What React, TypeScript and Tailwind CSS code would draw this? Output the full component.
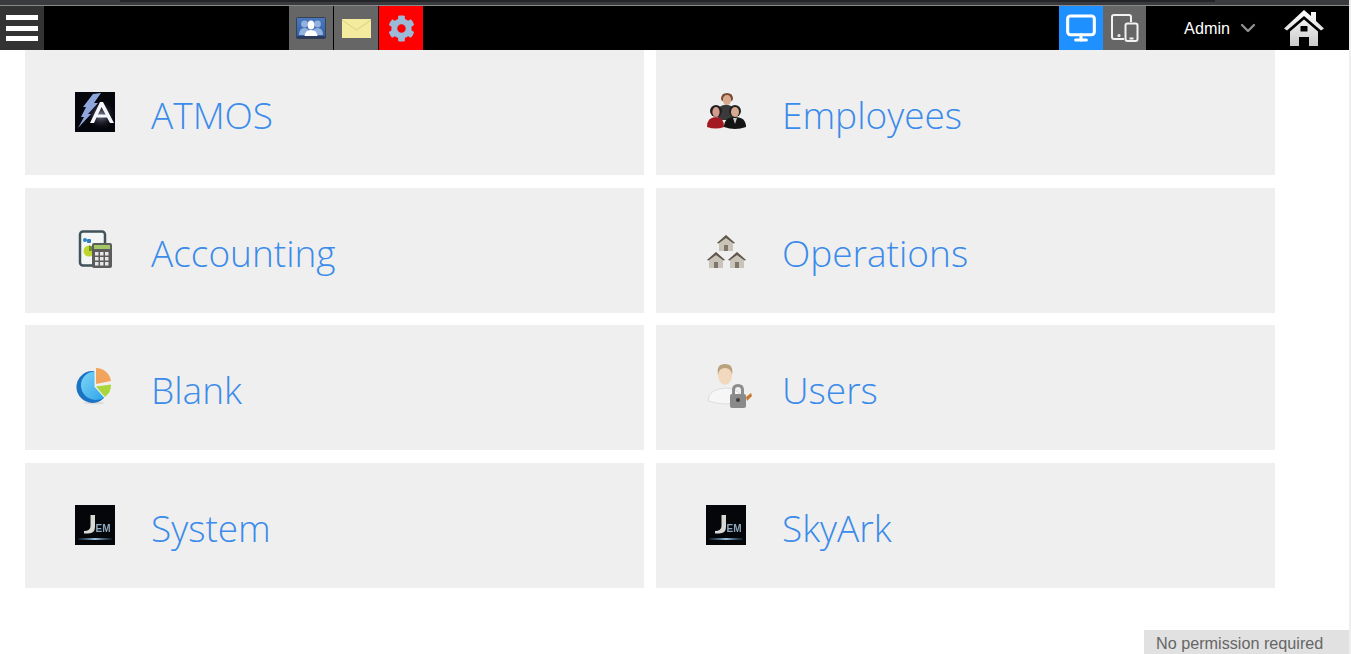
import React from "react";
import { Monitor, ChevronDown } from "lucide-react";
import { FaCog } from "react-icons/fa";

const AtmosIcon = () => (
  <svg width="40" height="40" viewBox="0 0 40 40">
    <defs>
      <radialGradient id="atmosglow" cx="0.5" cy="0.5" r="0.5">
        <stop offset="0" stopColor="#8d93ad" stopOpacity="0.9" />
        <stop offset="1" stopColor="#05050c" stopOpacity="0" />
      </radialGradient>
    </defs>
    <rect width="40" height="40" fill="#05050c" />
    <ellipse cx="26" cy="23" rx="16" ry="15" fill="url(#atmosglow)" />
    <path d="M18 2 L26 1 L19 11 L23 11 L13 22 L16 22 L3 36 L9 25 L6 25 L11 15 L8 15 Z" fill="#8fa6dc" />
    <path d="M25 10 L28 10 L39 31 L35 31 L32 25.5 L21.5 25.5 L19 31 L15 31 Z M26.5 15 L23 22.5 L30.5 22.5 Z" fill="#f4f6fb" fillRule="evenodd" />
  </svg>
);

const JemIcon = () => (
  <svg width="40" height="40" viewBox="0 0 40 40" style={{ fontFamily: "'Liberation Sans', sans-serif" }}>
    <defs>
      <linearGradient id="jemline" x1="0" y1="0" x2="1" y2="0">
        <stop offset="0" stopColor="#4a7296" stopOpacity="0.2" />
        <stop offset="0.5" stopColor="#9cc3e2" />
        <stop offset="1" stopColor="#4a7296" stopOpacity="0.2" />
      </linearGradient>
    </defs>
    <rect width="40" height="40" fill="#04060a" />
    <path d="M15.5 10 L20 10 L20 22 Q20 28.5 13 28.5 L9 28.5 L9 26 Q15.5 26 15.5 21 Z" fill="#d8d8d4" />
    <text x="20.5" y="27" fontSize="10" fontWeight="700" fill="#8fa8bd">EM</text>
    <rect x="3" y="33" width="34" height="2" rx="1" fill="url(#jemline)" />
  </svg>
);

const AccountingIcon = () => (
  <svg width="40" height="40" viewBox="0 0 40 40">
    <rect x="5" y="1.5" width="25" height="34" rx="3" fill="#f3f6f5" stroke="#42535a" strokeWidth="2.5" />
    <circle cx="10" cy="10" r="2" fill="#2f7fc0" />
    <rect x="12" y="9" width="4" height="4" rx="1" fill="#2f7fc0" />
    <circle cx="14" cy="21" r="5.5" fill="#bfd62f" />
    <path d="M14 21 L14 15.5 A5.5 5.5 0 0 1 19.5 21 Z" fill="#6f8f2a" />
    <rect x="17" y="13" width="20" height="25" rx="2" fill="#5c5c5c" />
    <rect x="19" y="15" width="16" height="4" fill="#a3c764" />
    {[22, 27, 32].map((y) =>
      [20, 25, 30].map((x) => <rect key={`${x}-${y}`} x={x} y={y} width="3.5" height="3.5" fill="#e6e6e6" />)
    )}
  </svg>
);

const BlankIcon = () => (
  <svg width="40" height="40" viewBox="0 0 40 40">
    <defs>
      <linearGradient id="pieb" x1="0" y1="0" x2="1" y2="1">
        <stop offset="0" stopColor="#7fd6f7" />
        <stop offset="1" stopColor="#2ea4e8" />
      </linearGradient>
    </defs>
    <ellipse cx="19" cy="36" rx="11" ry="1.5" fill="#ddd" />
    <path d="M19 4 A16 16 0 1 0 29 31 L19 20 Z" fill="#1b73c4" />
    <path d="M19.5 4.5 A14 14 0 0 0 6 20 A15 15 0 0 0 29 30.5 L19.5 20 Z" fill="url(#pieb)" />
    <path d="M21 19.5 L36 17.5 A15 15 0 0 1 30 30 Z" fill="#a9d63c" />
    <path d="M21 1 L21 17 L36 14 A15 15 0 0 0 21 1 Z" fill="#f2a45c" />
  </svg>
);

const EmployeesIcon = () => (
  <svg width="40" height="40" viewBox="0 0 40 40">
    <path d="M12 16 Q20 9 28 16 L28 28 L12 28 Z" fill="#3a3a3a" />
    <path d="M15 7 Q15 1 21 1 Q27 1 27 7 L26 9 L16 9 Z" fill="#7a4a32" />
    <ellipse cx="21" cy="8" rx="4.2" ry="5" fill="#d9a98c" />
    <circle cx="10" cy="19" r="6" fill="#1f1f1f" />
    <ellipse cx="10" cy="20" rx="3.6" ry="5" fill="#d69b8c" />
    <path d="M1 35 Q1 25 10 25 Q18 25 18 35 Q10 38 1 35 Z" fill="#a31921" />
    <circle cx="29" cy="19" r="6" fill="#222" />
    <ellipse cx="29" cy="20" rx="4" ry="5" fill="#d8aa92" />
    <path d="M18 35 Q18 25 29 25 Q40 25 40 35 Q29 39 18 35 Z" fill="#141414" />
    <path d="M27 26 L31 26 L29 32 Z" fill="#c9c9c9" />
  </svg>
);

const House = ({ x, y }: { x: number; y: number }) => (
  <g transform={`translate(${x} ${y})`}>
    <path d="M0 8 L9 0 L18 8 L16 8 L16 16 L2 16 L2 8 Z" fill="#c9c3b8" />
    <path d="M0 8 L9 0 L18 8 L16.5 8.5 L9 3 L1.5 8.5 Z" fill="#5f574d" />
    <rect x="7" y="10" width="4" height="6" fill="#7d766c" />
  </g>
);

const OperationsIcon = () => (
  <svg width="40" height="40" viewBox="0 0 40 40">
    <House x={11} y={5} />
    <House x={1} y={22} />
    <House x={22} y={22} />
  </svg>
);

const UsersIcon = () => (
  <svg width="48" height="48" viewBox="0 0 48 48">
    <path d="M2 38 Q2 26 20 25 Q36 26 36 38 Q20 44 2 38 Z" fill="#f6f6f6" stroke="#dcdcdc" />
    <ellipse cx="19" cy="12" rx="7" ry="10" fill="#f2d9bd" />
    <path d="M12 12 Q10 1 19 1 Q28 1 26 12 Q25 5 19 5 Q13 5 12 12 Z" fill="#b9a37f" />
    <path d="M26 31 L26 27 Q26 21 32 21 Q38 21 38 27 L38 31 L35 31 L35 27 Q35 24 32 24 Q29 24 29 27 L29 31 Z" fill="#8c8c8c" />
    <rect x="24" y="31" width="16" height="14" rx="2" fill="#8a8a8a" />
    <circle cx="32" cy="37" r="2" fill="#3c3c3c" />
    <path d="M40 34 L45 30 L46 33 L41 38 Z" fill="#c97a2c" />
  </svg>
);

const PeopleIcon = () => (
  <svg width="30" height="22" viewBox="0 0 30 22">
    <defs>
      <linearGradient id="peoplebg" x1="0" y1="0" x2="0" y2="1">
        <stop offset="0" stopColor="#4b78bd" />
        <stop offset="1" stopColor="#2f5fa8" />
      </linearGradient>
    </defs>
    <rect x="0.5" y="0.5" width="29" height="21" rx="1" fill="url(#peoplebg)" stroke="#39404f" />
    <rect x="1" y="19" width="28" height="2.5" fill="#2b3b5c" />
    <circle cx="8.5" cy="7" r="3.4" fill="#93b1de" />
    <path d="M3 18 Q3 11 8.5 11 Q14 11 14 18 Z" fill="#93b1de" />
    <circle cx="21.5" cy="7" r="3.4" fill="#93b1de" />
    <path d="M16 18 Q16 11 21.5 11 Q27 11 27 18 Z" fill="#93b1de" />
    <ellipse cx="15" cy="8" rx="3.4" ry="4.5" fill="#fff" />
    <path d="M8.5 19 Q9 13 15 13 Q21 13 21.5 19 Z" fill="#fff" />
  </svg>
);

const MailIcon = () => (
  <svg width="29" height="19" viewBox="0 0 29 19">
    <rect width="29" height="19" fill="#f4eb9e" />
    <path d="M0 1 L14.5 11 L29 1" fill="none" stroke="#dccf82" strokeWidth="1" />
  </svg>
);

const DevicesIcon = () => (
  <svg width="28" height="28" viewBox="0 0 28 28" fill="none" stroke="#f2f2f2" strokeWidth="2">
    <path d="M20 8 V3 Q20 1 18 1 H3 Q1 1 1 3 V23 Q1 25 3 25 H13" />
    <rect x="14.5" y="9.5" width="12" height="17.5" rx="2" />
    <path d="M18.5 24.5 H22.5" />
    <circle cx="8" cy="21.5" r="0.6" fill="#f2f2f2" />
  </svg>
);

const HomeIcon = () => (
  <svg width="40" height="38" viewBox="0 0 40 38">
    <defs>
      <linearGradient id="homeg" x1="0" y1="0" x2="0" y2="1">
        <stop offset="0" stopColor="#ffffff" />
        <stop offset="1" stopColor="#c9c9c9" />
      </linearGradient>
    </defs>
    <path
      fill="url(#homeg)"
      fillRule="evenodd"
      d="M20 1 L27 7 L27 3 L32 3 L32 12 L40 19.5 L37 21.5 L20 7 L3 21.5 L0 19.5 Z M20 10.5 L34 22.5 L34 37 L25 37 L25 28 L15 28 L15 37 L6 37 L6 22.5 Z M16.5 17 H23.5 V22.5 H16.5 Z"
    />
  </svg>
);

const cards: [string, React.ReactNode][] = [
  ["ATMOS", <AtmosIcon />],
  ["Employees", <EmployeesIcon />],
  ["Accounting", <AccountingIcon />],
  ["Operations", <OperationsIcon />],
  ["Blank", <BlankIcon />],
  ["Users", <UsersIcon />],
  ["System", <JemIcon />],
  ["SkyArk", <JemIcon />],
];

export default function App() {
  return (
    <div className="h-[654px] w-[1351px] overflow-hidden bg-white flex flex-col border-r-2 border-[#eeeeee] font-['Open_Sans',sans-serif]">
      <div className="h-[6px] shrink-0 bg-[#3a3b3f] border-b border-[#8a8a8a]">
        <div className="ml-[120px] w-[1095px] h-[2px] bg-[#232428]" />
      </div>
      <header className="h-[44px] shrink-0 bg-black flex items-stretch">
        <button className="w-[44px] bg-[#333333] flex flex-col justify-center gap-[5.5px] pl-[6px]">
          <span className="block h-[5px] w-[32px] bg-white" />
          <span className="block h-[5px] w-[32px] bg-white" />
          <span className="block h-[5px] w-[32px] bg-white" />
        </button>
        <div className="ml-[245px] flex items-stretch">
          <div className="w-[44px] bg-[#666666] flex items-center justify-center"><PeopleIcon /></div>
          <div className="w-[1px] bg-black" />
          <div className="w-[44px] bg-[#666666] flex items-center justify-center"><MailIcon /></div>
          <div className="w-[1px] bg-black" />
          <div className="w-[44px] bg-[#ff0000] flex items-center justify-center">
            <FaCog size={27} color="#9cb9d8" />
          </div>
        </div>
        <div className="ml-auto flex items-stretch">
          <div className="w-[44px] bg-[#1e90ff] flex items-center justify-center">
            <Monitor size={32} color="#ffffff" strokeWidth={2.3} />
          </div>
          <div className="w-[43px] bg-[#666666] flex items-center justify-center"><DevicesIcon /></div>
          <div className="w-[38px]" />
          <div className="flex items-center text-white text-[16.2px] font-['Liberation_Sans',sans-serif]">Admin</div>
          <div className="ml-[6px] flex items-center"><ChevronDown size={24} color="#8f8f8f" strokeWidth={2.4} /></div>
          <div className="ml-[24px] mr-[25px] flex items-center"><HomeIcon /></div>
        </div>
      </header>
      <main className="grid grid-cols-[619px_619px] gap-x-[12px] gap-y-[12.5px] pl-[25px]">
        {cards.map(([label, icon]) => (
          <div key={label} className="h-[125px] bg-[#efefef] flex items-center pl-[50px]">
            <div className="w-[40px] h-[40px] -mt-[1px] flex items-center justify-start blur-[0.4px]">
              <div className="shrink-0">{icon}</div>
            </div>
            <span className="ml-[36px] mt-[4px] text-[37px] font-light text-[#3b8bea] leading-none">{label}</span>
          </div>
        ))}
      </main>
      <div className="mt-auto self-end w-[205px] h-[24px] bg-[#e1e1e1] pl-[12px] text-[16.2px] text-[#666666] leading-[26px] font-['Liberation_Sans',sans-serif]">
        No permission required
      </div>
    </div>
  );
}
